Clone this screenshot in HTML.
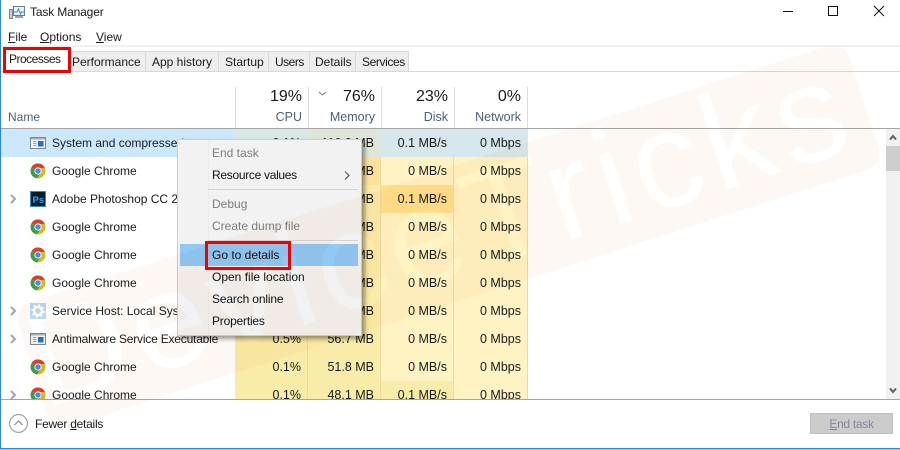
<!DOCTYPE html>
<html><head><meta charset="utf-8"><style>
html,body{margin:0;padding:0}
body{width:900px;height:450px;overflow:hidden;background:#fff;position:relative;font-family:"Liberation Sans",sans-serif;font-size:12px;color:#1a1a1a}
.a{position:absolute}
.t{position:absolute;white-space:nowrap;line-height:16px;height:16px}
u{text-decoration-thickness:1px;text-underline-offset:1px}
.tab{position:absolute;top:51px;height:20px;line-height:20px;background:#eeeeee;border:1px solid #d9d9d9;border-bottom:none;border-left:none;box-sizing:border-box;white-space:nowrap}
.hs{position:absolute;top:87px;height:41px;width:1px;background:#dcdcdc}
.pc{position:absolute;width:70px;text-align:right;font-size:16px;line-height:20px;top:87px;color:#1a1a1a}
.hl{position:absolute;width:72px;text-align:right;top:109px;line-height:16px;color:#4c607a;font-size:12.5px}
#rows{position:absolute;left:0;top:129px;width:886px;height:270px;overflow:hidden}
.c{position:absolute;height:28px;line-height:28px;text-align:right;padding-right:6px;box-sizing:border-box;white-space:nowrap;border-right:1px solid #eedb9f;font-size:12.5px}
.k1{left:235px;width:73px}.k2{left:308px;width:73px}.k3{left:381px;width:73px}.k4{left:454px;width:74px}
.y{background:#fff3c4}.m{background:#f9eca8}.o{background:#fde09a}.s{background:#f9eca8}
.n{position:absolute;left:52px;height:28px;line-height:28px;white-space:nowrap}
.ic{position:absolute;left:30px;width:16px;height:16px}
.ch{position:absolute;left:9px;width:8px;height:12px}
.mi{position:absolute;left:212px;line-height:16px;height:16px;white-space:nowrap;color:#111}
.d{color:#7d7d7d}
.wm{position:absolute;left:12px;top:171px;width:873px;height:130px;border-radius:18px;background:#fef8f4;mix-blend-mode:multiply;transform:rotate(-17.8deg);overflow:hidden;color:#fff;font-size:136px;letter-spacing:7px;line-height:118px;text-align:right;padding-right:18px;box-sizing:border-box;white-space:nowrap;z-index:5;pointer-events:none}
</style></head><body>

<div class="a" style="left:0;top:0;width:1px;height:449px;background:#2b88d8"></div>
<div class="a" style="left:0;top:448px;width:900px;height:1px;background:#2b88d8"></div>
<div class="a" style="left:0;top:449px;width:900px;height:1px;background:#bbb"></div>

<svg class="a" style="left:9px;top:5px" width="17" height="15" viewBox="0 0 17 15"><rect x="4.500" y="1.500" width="11" height="9" fill="#e8f2f8" stroke="#6d7c88"/><path d="M5 7h3l1.500-3 2 5 1-2h3" fill="none" stroke="#3a8fc0"/><rect x="0.500" y="4.500" width="3" height="9" fill="#c6cdd2" stroke="#7c878f"/><rect x="6" y="11" width="8" height="2" fill="#9aa3aa"/></svg>
<div class="t" style="left:30px;top:4px;letter-spacing:-.15px">Task Manager</div>
<div class="a" style="left:783px;top:11px;width:10px;height:1px;background:#111"></div>
<div class="a" style="left:828px;top:6px;width:8px;height:8px;border:1px solid #111"></div>
<svg class="a" style="left:873px;top:5px" width="12" height="12" viewBox="0 0 12 12"><path d="M1 1L11 11M11 1L1 11" stroke="#111" stroke-width="1" fill="none"/></svg>

<div class="t" style="left:8px;top:29px"><u>F</u>ile</div>
<div class="t" style="left:40px;top:29px"><u>O</u>ptions</div>
<div class="t" style="left:96px;top:29px"><u>V</u>iew</div>

<div class="a" style="left:1px;top:45px;width:899px;height:2px;background:#f0f0f0"></div>
<div class="a" style="left:1px;top:71px;width:899px;height:1px;background:#d9d9d9"></div>
<div class="a" style="left:4px;top:48px;width:66px;height:24px;background:#fff"></div>
<div class="t" style="left:9px;top:51px;letter-spacing:-.5px">Processes</div>
<div class="tab" style="left:71px;width:75px;padding-left:1px">Performance</div>
<div class="tab" style="left:146px;width:73px;padding-left:6px">App history</div>
<div class="tab" style="left:219px;width:50px;padding-left:6px">Startup</div>
<div class="tab" style="left:269px;width:41px;padding-left:6px;letter-spacing:-.5px">Users</div>
<div class="tab" style="left:310px;width:46px;padding-left:5px">Details</div>
<div class="tab" style="left:356px;width:53px;padding-left:6px;letter-spacing:-.4px">Services</div>

<div class="t" style="left:8px;top:109px;color:#4c607a">Name</div>
<div class="hs" style="left:235px"></div><div class="hs" style="left:308px"></div><div class="hs" style="left:381px"></div><div class="hs" style="left:454px"></div><div class="hs" style="left:527px"></div>
<div class="pc" style="left:232px">19%</div><div class="pc" style="left:305px">76%</div><div class="pc" style="left:378px">23%</div><div class="pc" style="left:451px">0%</div>
<svg class="a" style="left:318px;top:91px" width="9" height="5" viewBox="0 0 9 5"><path d="M1 1L4.500 4L8 1" fill="none" stroke="#777"/></svg>
<div class="hl" style="left:230px">CPU</div><div class="hl" style="left:303px">Memory</div><div class="hl" style="left:376px">Disk</div><div class="hl" style="left:449px">Network</div>
<div class="a" style="left:1px;top:128px;width:899px;height:1px;background:#a5a5a5"></div>

<svg width="0" height="0" style="position:absolute"><defs>
<symbol id="chr" viewBox="0 0 16 16"><circle cx="8" cy="8" r="7.500" fill="#ddb52e"/><path d="M8 8L1.500 4.200A7.500 7.500 0 0 1 14.900 5H8z" fill="#d8402f"/><path d="M8 8L1.500 4.200A7.500 7.500 0 0 0 7 15.400L10.500 10z" fill="#3a9f4b"/><circle cx="8" cy="8" r="3.600" fill="#fff"/><circle cx="8" cy="8" r="2.700" fill="#4d8ae8"/></symbol>
<symbol id="win" viewBox="0 0 16 16"><rect x=".5" y="2.500" width="15" height="11" fill="#f4f4f4" stroke="#7d8791"/><rect x="1" y="3" width="14" height="1.500" fill="#a8b0b8"/><rect x="8" y="6" width="5.500" height="5.500" fill="#1e6fd0"/><path d="M3 6.500h3.500M3 8.500h3.500M3 10.500h3.500" stroke="#9aa3ab"/></symbol>
<symbol id="arr" viewBox="0 0 8 12"><path d="M2 2L6 6L2 10" fill="none" stroke="#a6a6a6" stroke-width="2"/></symbol>
</defs></svg>

<div id="rows">
<div class="a" style="left:1px;top:0;width:234px;height:28px;background:#cce8ff"></div>
<div class="c k1" style="top:0;background:#d8e8e6;border-color:#d8e8e6">0.1%</div><div class="c k2" style="top:0;background:#dde6d9;border-color:#dde6d9">116.9 MB</div><div class="c k3" style="top:0;background:#d7e8ec;border-color:#d7e8ec">0.1 MB/s</div><div class="c k4" style="top:0;background:#d7e8ec;border-color:#d7e8ec">0 Mbps</div>
<svg class="ic" style="top:6px"><use href="#win"/></svg><div class="n" style="top:0">System and compressed memory</div>

<svg class="ic" style="top:34px"><use href="#chr"/></svg><div class="n" style="top:28px">Google Chrome</div>
<div class="c k1 m" style="top:28px">0.1%</div><div class="c k2 o" style="top:28px">98.7 MB</div><div class="c k3 y" style="top:28px">0 MB/s</div><div class="c k4 y" style="top:28px">0 Mbps</div>

<svg class="ch" style="top:64px"><use href="#arr"/></svg>
<svg class="ic" style="top:62px" viewBox="0 0 16 16"><rect x=".5" y=".5" width="15" height="15" fill="#001d26" stroke="#2c8fc0"/><text x="2.500" y="12" font-size="9.500" font-weight="700" fill="#31a8ff" font-family="Liberation Sans">Ps</text></svg>
<div class="n" style="top:56px">Adobe Photoshop CC 2018</div>
<div class="c k1 m" style="top:56px">0.1%</div><div class="c k2 s" style="top:56px">82.1 MB</div><div class="c k3 o" style="top:56px;background:#ffe08c">0.1 MB/s</div><div class="c k4 y" style="top:56px">0 Mbps</div>

<svg class="ic" style="top:90px"><use href="#chr"/></svg><div class="n" style="top:84px">Google Chrome</div>
<div class="c k1 m" style="top:84px">0.1%</div><div class="c k2 s" style="top:84px">75.4 MB</div><div class="c k3 y" style="top:84px">0 MB/s</div><div class="c k4 y" style="top:84px">0 Mbps</div>

<svg class="ic" style="top:118px"><use href="#chr"/></svg><div class="n" style="top:112px">Google Chrome</div>
<div class="c k1 m" style="top:112px">0.1%</div><div class="c k2 s" style="top:112px">71.2 MB</div><div class="c k3 y" style="top:112px">0 MB/s</div><div class="c k4 y" style="top:112px">0 Mbps</div>

<svg class="ic" style="top:146px"><use href="#chr"/></svg><div class="n" style="top:140px">Google Chrome</div>
<div class="c k1 m" style="top:140px">0.1%</div><div class="c k2 s" style="top:140px">66.3 MB</div><div class="c k3 y" style="top:140px">0 MB/s</div><div class="c k4 y" style="top:140px">0 Mbps</div>

<svg class="ch" style="top:176px"><use href="#arr"/></svg>
<svg class="ic" style="top:174px" viewBox="0 0 16 16"><rect width="16" height="16" fill="#b9d8f4"/><circle cx="8" cy="8" r="4" fill="none" stroke="#fff" stroke-width="2.500"/><circle cx="8" cy="8" r="6" fill="none" stroke="#fff" stroke-width="1.500" stroke-dasharray="2 2.700"/></svg>
<div class="n" style="top:168px">Service Host: Local System</div>
<div class="c k1 m" style="top:168px">0.1%</div><div class="c k2 s" style="top:168px">60.4 MB</div><div class="c k3 y" style="top:168px">0 MB/s</div><div class="c k4 y" style="top:168px">0 Mbps</div>

<svg class="ch" style="top:204px"><use href="#arr"/></svg>
<svg class="ic" style="top:202px"><use href="#win"/></svg><div class="n" style="top:196px;letter-spacing:-.2px">Antimalware Service Executable</div>
<div class="c k1 m" style="top:196px">0.5%</div><div class="c k2 s" style="top:196px">56.7 MB</div><div class="c k3 y" style="top:196px">0 MB/s</div><div class="c k4 y" style="top:196px">0 Mbps</div>

<svg class="ic" style="top:230px"><use href="#chr"/></svg><div class="n" style="top:224px">Google Chrome</div>
<div class="c k1 m" style="top:224px">0.1%</div><div class="c k2 s" style="top:224px">51.8 MB</div><div class="c k3 y" style="top:224px">0 MB/s</div><div class="c k4 y" style="top:224px">0 Mbps</div>

<svg class="ch" style="top:260px"><use href="#arr"/></svg>
<svg class="ic" style="top:258px"><use href="#chr"/></svg><div class="n" style="top:252px">Google Chrome</div>
<div class="c k1 m" style="top:252px">0.1%</div><div class="c k2 s" style="top:252px">48.1 MB</div><div class="c k3 m" style="top:252px">0.1 MB/s</div><div class="c k4 y" style="top:252px">0 Mbps</div>
</div>

<div class="a" style="left:886px;top:129px;width:14px;height:270px;background:#f0f0f0"></div>
<div class="a" style="left:886px;top:146px;width:14px;height:25px;background:#cdcdcd"></div>
<svg class="a" style="left:889px;top:134px" width="8" height="7" viewBox="0 0 8 7"><path d="M1 5.500L4 2L7 5.500" fill="none" stroke="#606060" stroke-width="2"/></svg>
<svg class="a" style="left:889px;top:387px" width="8" height="7" viewBox="0 0 8 7"><path d="M1 1.500L4 5L7 1.500" fill="none" stroke="#606060" stroke-width="2"/></svg>

<div class="a" style="left:1px;top:399px;width:899px;height:1px;background:#a5a5a5"></div>

<svg class="a" style="left:9px;top:414px" width="19" height="19" viewBox="0 0 19 19"><circle cx="9.500" cy="9.500" r="8.900" fill="#fff" stroke="#9a9a9a" stroke-width="1.100"/><path d="M5.500 11L9.500 7L13.500 11" fill="none" stroke="#8a8a8a" stroke-width="1.200"/></svg>
<div class="t" style="left:35px;top:416px;letter-spacing:-.25px">Fewer <u>d</u>etails</div>
<div class="a" style="left:810px;top:413px;width:81px;height:19px;background:#cccccc;border:1px solid #bfbfbf;text-align:center;line-height:20px;color:#8686a0;letter-spacing:-.3px"><u>E</u>nd task</div>

<div class="a" style="left:177px;top:139px;width:183px;height:195px;background:#f2f2f2;border:1px solid #cfcfcf;box-shadow:3px 3px 4px rgba(0,0,0,.38)"></div>
<div class="a" style="left:208px;top:140px;width:1px;height:194px;background:#ececec"></div>
<div class="mi d" style="top:145px">End task</div>
<div class="mi" style="top:167px;letter-spacing:-.3px">Resource values</div>
<svg class="a" style="left:344px;top:171px" width="6" height="9" viewBox="0 0 6 9"><path d="M1 .5L5 4.500L1 8.500" fill="none" stroke="#444"/></svg>
<div class="a" style="left:208px;top:189px;width:150px;height:1px;background:#d4d4d4"></div>
<div class="mi d" style="top:196px">Debug</div>
<div class="mi d" style="top:218px">Create dump file</div>
<div class="a" style="left:208px;top:240px;width:150px;height:1px;background:#d4d4d4"></div>
<div class="a" style="left:180px;top:244px;width:178px;height:22px;background:#90c8f6"></div>
<div class="mi" style="top:247px">Go to details</div>
<div class="mi" style="top:269px">Open file location</div>
<div class="mi" style="top:291px;letter-spacing:-.15px">Search online</div>
<div class="mi" style="top:313px;letter-spacing:-.2px">Properties</div>

<div class="wm">DeviceTricks</div>

<div class="a" style="left:3px;top:47px;width:62px;height:20px;border:3px solid #f00000;z-index:6"></div>
<div class="a" style="left:205px;top:241px;width:80px;height:23px;border:3px solid #f00000;z-index:6"></div>

</body></html>
